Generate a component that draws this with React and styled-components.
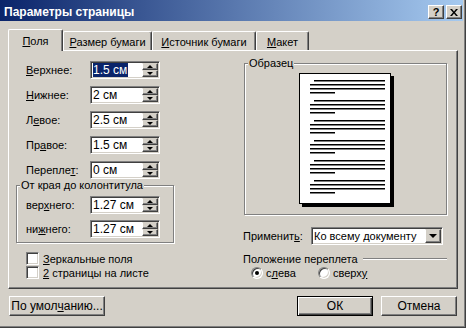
import styled, { createGlobalStyle } from 'styled-components'

const face = '#d4d0c8'

const GlobalStyle = createGlobalStyle`
  html, body { margin: 0; padding: 0; background: #fff; }
  body {
    font-family: "Liberation Sans", Arial, sans-serif;
    font-size: 11px;
    color: #000;
  }
`

const Dialog = styled.div`
  width: 466px;
  height: 328px;
  box-sizing: border-box;
  background: ${face};
  border-right: 1px solid #404040;
  border-bottom: 1px solid #404040;
  box-shadow: inset -1px -1px #808080;
  display: flex;
  flex-direction: column;
`

const TitleBar = styled.div`
  height: 21px;
  margin-right: 2px;
  box-sizing: border-box;
  padding: 3px 1px 0 4px;
  background: linear-gradient(to right, #0a246a, #a6caf0);
  display: flex;
  align-items: center;
  gap: 2px;
`

const Title = styled.div`
  flex: 1;
  color: #fff;
  font-weight: bold;
  font-size: 12px;
`

const CapButton = styled.div`
  width: 16px;
  height: 14px;
  box-sizing: border-box;
  background: ${face};
  border: 1px solid;
  border-color: #fff #404040 #404040 #fff;
  box-shadow: inset -1px -1px #808080;
  display: flex;
  align-items: center;
  justify-content: center;
  font-weight: bold;
  font-size: 11px;
  line-height: 1;
`

const TabRow = styled.div`
  display: flex;
  align-items: flex-end;
  margin: 8px 0 0 8px;
  height: 21px;
`

const Tab = styled.div`
  position: relative;
  z-index: ${p => (p.$active ? 1 : 0)};
  width: ${p => p.$w}px;
  height: ${p => (p.$active ? 22 : 19)}px;
  margin-bottom: ${p => (p.$active ? -1 : 0)}px;
  box-sizing: border-box;
  background: ${face};
  border-top: 1px solid #fff;
  border-left: 1px solid #fff;
  border-right: 1px solid #404040;
  box-shadow: inset -1px 0 #808080;
  border-top-left-radius: 2px;
  border-top-right-radius: 2px;
  display: flex;
  justify-content: center;
  padding-top: ${p => (p.$active ? 5 : 4)}px;
`

const Panel = styled.div`
  margin-left: 8px;
  width: 450px;
  height: 239px;
  box-sizing: border-box;
  border-top: 1px solid #fff;
  border-left: 1px solid #fff;
  border-right: 1px solid #404040;
  border-bottom: 1px solid #404040;
  box-shadow: inset -1px -1px #808080;
  padding: 6px 0 0 7px;
  display: grid;
  grid-template-columns: 158px 203px;
  column-gap: 70px;
  align-items: start;
`

const LeftCol = styled.div`
  margin-top: 4px;
  display: flex;
  flex-direction: column;
`

const RightCol = styled.div`
  margin-top: 6px;
  display: flex;
  flex-direction: column;
`

const Rows = styled.div`
  display: flex;
  flex-direction: column;
  gap: ${p => p.$gap}px;
`

const Row = styled.div`
  display: flex;
  align-items: center;
  height: 18px;
  padding-left: ${p => p.$indent}px;
`

const Label = styled.div`
  width: ${p => p.$w}px;
  flex-shrink: 0;
  white-space: nowrap;
`

const Field = styled.div`
  width: 70px;
  height: 18px;
  box-sizing: border-box;
  background: #fff;
  border: 1px solid;
  border-color: #808080 #fff #fff #808080;
  box-shadow: inset 1px 1px #404040, inset -1px -1px ${face};
  padding: 1px;
  display: flex;
`

const Value = styled.div`
  flex: 1;
  min-width: 0;
  display: flex;
  align-items: center;
  padding-left: 1px;
  font-size: ${p => p.$size || 12}px;
  white-space: nowrap;
  overflow: hidden;
`

const Selected = styled.span`
  background: #0a246a;
  color: #fff;
  line-height: 14px;
  padding-right: 1px;
`

const Spin = styled.div`
  width: 16px;
  display: flex;
  flex-direction: column;
`

const SpinBtn = styled.div`
  flex: 1;
  box-sizing: border-box;
  background: ${face};
  border: 1px solid;
  border-color: ${face} #404040 #404040 #fff;
  box-shadow: inset -1px -1px #808080;
  display: flex;
  align-items: center;
  justify-content: center;
  &::after {
    content: '';
    border-left: 3px solid transparent;
    border-right: 3px solid transparent;
    ${p => (p.$down ? 'border-top: 3px solid #000;' : 'border-bottom: 3px solid #000;')}
  }
`

const Group = styled.div`
  position: relative;
  border: 1px solid #808080;
  box-shadow: 1px 1px #fff, inset 1px 1px #fff;
  margin-top: ${p => p.$mt}px;
  padding: ${p => p.$pad};
  display: flex;
  flex-direction: column;
  align-items: ${p => (p.$center ? 'center' : 'stretch')};
`

const GroupLabel = styled.div`
  position: absolute;
  top: -7px;
  left: 3px;
  line-height: 13px;
  padding: 0 1px;
  background: ${face};
  white-space: nowrap;
`

const Checks = styled.div`
  margin-top: 9px;
  padding-left: 10px;
  display: flex;
  flex-direction: column;
  gap: 1px;
`

const CheckRow = styled.div`
  display: flex;
  align-items: center;
  gap: 4px;
  height: 13px;
`

const CheckBox = styled.div`
  width: 13px;
  height: 13px;
  box-sizing: border-box;
  background: #fff;
  border: 1px solid;
  border-color: #808080 #fff #fff #808080;
  box-shadow: inset 1px 1px #404040, inset -1px -1px ${face};
`

const ApplyRow = styled.div`
  margin: 12px 0 0 -1px;
  display: flex;
  align-items: center;
`

const Select = styled.div`
  width: 132px;
  height: 18px;
  flex-shrink: 0;
  box-sizing: border-box;
  background: #fff;
  border: 1px solid;
  border-color: #808080 #fff #fff #808080;
  box-shadow: inset 1px 1px #404040, inset -1px -1px ${face};
  padding: 1px;
  display: flex;
`

const DropBtn = styled(SpinBtn)`
  flex: none;
  width: 16px;
  &::after {
    border-left-width: 4px;
    border-right-width: 4px;
    border-top-width: 4px;
  }
`

const SectionLine = styled.div`
  margin: 7px 0 0 -1px;
  height: 13px;
  display: flex;
  align-items: center;
  gap: 5px;
  &::after {
    content: '';
    flex: 1;
    border-top: 1px solid #808080;
    border-bottom: 1px solid #fff;
  }
`

const RadioRow = styled.div`
  margin-top: 1px;
  padding-left: 7px;
  height: 13px;
  display: flex;
  align-items: center;
`

const RadioItem = styled.div`
  width: ${p => p.$w}px;
  display: flex;
  align-items: center;
  gap: 3px;
`

const Radio = styled.div`
  width: 12px;
  height: 12px;
  box-sizing: border-box;
  border-radius: 50%;
  background: #fff;
  border: 1px solid;
  border-color: #808080 #fff #fff #808080;
  box-shadow: inset 1px 1px #404040, inset -1px -1px ${face};
  display: flex;
  align-items: center;
  justify-content: center;
  &::after {
    content: '';
    width: 4px;
    height: 4px;
    border-radius: 50%;
    background: ${p => (p.$on ? '#000' : 'transparent')};
  }
`

const Footer = styled.div`
  margin-top: 7px;
  padding: 0 8px 0 9px;
  display: flex;
  gap: 8px;
`

const Button = styled.div`
  width: ${p => p.$w}px;
  height: 20px;
  box-sizing: border-box;
  background: ${face};
  border: 1px solid;
  border-color: #fff #404040 #404040 #fff;
  box-shadow: inset -1px -1px #808080;
  display: flex;
  align-items: center;
  justify-content: center;
  font-size: 12px;
  ${p => p.$default && `
    border-color: #000;
    box-shadow: inset 1px 1px #fff, inset -1px -1px #404040, inset -2px -2px #808080;
  `}
  ${p => p.$push && 'margin-left: auto;'}
`

const U = styled.span`
  text-decoration: underline;
`

function SpinField({ children }) {
  return (
    <Field>
      <Value>{children}</Value>
      <Spin>
        <SpinBtn />
        <SpinBtn $down />
      </Spin>
    </Field>
  )
}

function PagePreview() {
  const groups = [7, 27, 47, 67, 87, 107]
  return (
    <svg width="95" height="134" viewBox="0 0 95 134">
      <rect x="3" y="3" width="92" height="131" fill="#000" />
      <rect x="0.5" y="0.5" width="91" height="130" fill="#fff" stroke="#000" />
      {groups.map(y => (
        <g key={y} fill="#000">
          <rect x="15" y={y} width="71" height="1.5" />
          <rect x="11" y={y + 4} width="75" height="1.5" />
          <rect x="11" y={y + 8} width="75" height="1.5" />
          <rect x="11" y={y + 12} width="25" height="1.5" />
        </g>
      ))}
    </svg>
  )
}

const margins = [
  [<><U>В</U>ерхнее:</>, <Selected>1.5 см</Selected>],
  [<><U>Н</U>ижнее:</>, '2 см'],
  [<>Л<U>е</U>вое:</>, '2.5 см'],
  [<>Пр<U>а</U>вое:</>, '1.5 см'],
  [<>Перепле<U>т</U>:</>, '0 см'],
]

export default function App() {
  return (
    <>
      <GlobalStyle />
      <Dialog>
        <TitleBar>
          <Title>Параметры страницы</Title>
          <CapButton>?</CapButton>
          <CapButton>
            <svg width="8" height="7" viewBox="0 0 8 7">
              <path d="M0 0h2l2 2.5L6 0h2L5 3.5 8 7H6L4 4.5 2 7H0l3-3.5z" fill="#000" />
            </svg>
          </CapButton>
        </TitleBar>

        <TabRow>
          <Tab $active $w={55}><span><U>П</U>оля</span></Tab>
          <Tab $w={89}><span><U>Р</U>азмер бумаги</span></Tab>
          <Tab $w={104}><span><U>И</U>сточник бумаги</span></Tab>
          <Tab $w={53}><span><U>М</U>акет</span></Tab>
        </TabRow>

        <Panel>
          <LeftCol>
            <Rows $gap={7}>
              {margins.map(([label, value], i) => (
                <Row key={i} $indent={10}>
                  <Label $w={64}>{label}</Label>
                  <SpinField>{value}</SpinField>
                </Row>
              ))}
            </Rows>

            <Group $mt={6} $pad="10px 0 4px 9px">
              <GroupLabel>От края до колонтитула</GroupLabel>
              <Rows $gap={6}>
                <Row>
                  <Label $w={64}>вер<U>х</U>него:</Label>
                  <SpinField>1.27 см</SpinField>
                </Row>
                <Row>
                  <Label $w={64}>ни<U>ж</U>него:</Label>
                  <SpinField>1.27 см</SpinField>
                </Row>
              </Rows>
            </Group>

            <Checks>
              <CheckRow>
                <CheckBox />
                <span><U>З</U>еркальные поля</span>
              </CheckRow>
              <CheckRow>
                <CheckBox />
                <span><U>2</U> страницы на листе</span>
              </CheckRow>
            </Checks>
          </LeftCol>

          <RightCol>
            <Group $center $pad="9px 0 7px 1px">
              <GroupLabel>Образец</GroupLabel>
              <PagePreview />
            </Group>

            <ApplyRow>
              <Label $w={68}>Применит<U>ь</U>:</Label>
              <Select>
                <Value $size={11}>Ко всему документу</Value>
                <DropBtn $down />
              </Select>
            </ApplyRow>

            <SectionLine>
              <span>Положение переплета</span>
            </SectionLine>

            <RadioRow>
              <RadioItem $w={67}>
                <Radio $on />
                <span>с<U>л</U>ева</span>
              </RadioItem>
              <RadioItem $w={80}>
                <Radio />
                <span>сверх<U>у</U></span>
              </RadioItem>
            </RadioRow>
          </RightCol>
        </Panel>

        <Footer>
          <Button $w={96}>По умол<U>ч</U>анию...</Button>
          <Button $w={76} $default $push>ОК</Button>
          <Button $w={76}>Отмена</Button>
        </Footer>
      </Dialog>
    </>
  )
}
